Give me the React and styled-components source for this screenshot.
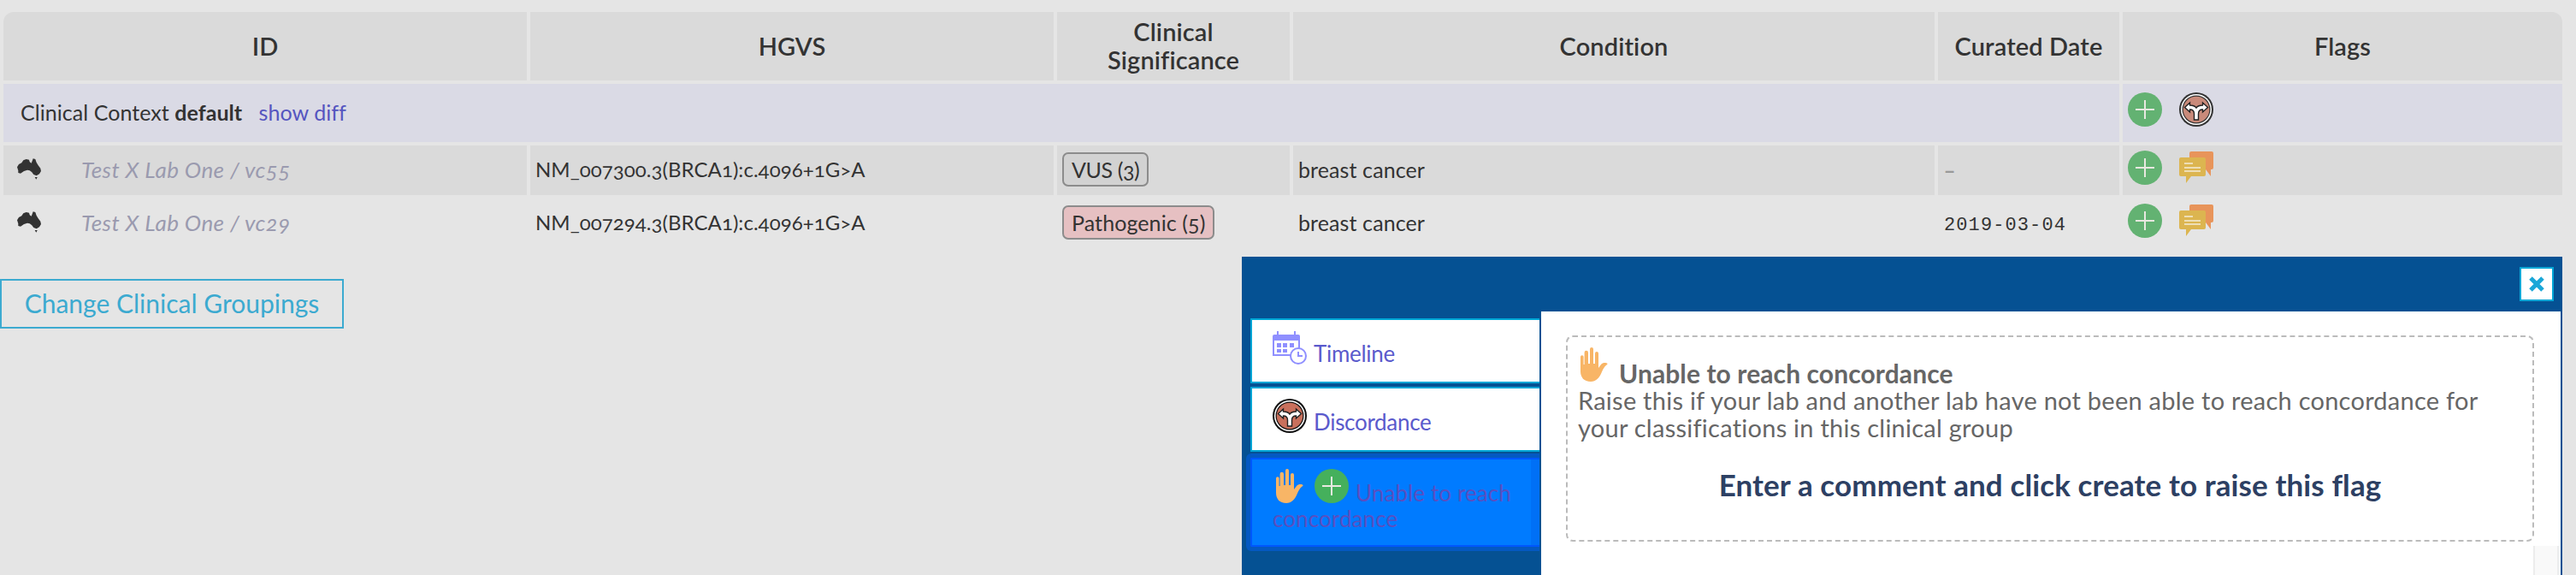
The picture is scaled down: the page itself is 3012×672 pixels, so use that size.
import React from "react";
import styled, { createGlobalStyle } from "styled-components";

const Global = createGlobalStyle`
  html, body { margin: 0; padding: 0; background: #e5e5e5; }
  body { width: 3012px; height: 672px; overflow: hidden; font-family: "Lato", "Open Sans", sans-serif; font-feature-settings: "onum" 1; color: #333; }
`;
const Page = styled.div`width: 3012px; height: 672px; position: relative; padding-top: 10px; box-sizing: border-box;`;
const Table = styled.table`
  width: 3000px; table-layout: fixed; border-collapse: separate; border-spacing: 4px; font-size: 24px;
`;
const Th = styled.th`
  height: 80px; padding: 0 8px 2px; box-sizing: border-box; background: #dadada; color: #333; font-size: 29px; font-weight: 600; letter-spacing: .1px; line-height: 33px; text-align: center;
  &:first-child { border-top-left-radius: 12px; }
  &:last-child { border-top-right-radius: 12px; }
`;
const ContextRow = styled.tr`height: 68px;`;
const ContextCell = styled.td`background: #dadae5; padding: 0 20px 3px; font-size: 25px; letter-spacing: .05px;`;
const FlagContextCell = styled.td`background: #dadae5; padding: 0 6px;`;
const Row = styled.tr`height: 58px;`;
const Td = styled.td`background: ${p => p.$shaded ? "#dadada" : "transparent"}; padding: 0 6px 3px; font-size: 25px; letter-spacing: .1px; color: #333; white-space: nowrap;`;
const HgvsCell = styled(Td)`font-size: 24px; letter-spacing: .05px;`;
const DateCell = styled(Td)`padding-left: 7px;`;
const FlagCell = styled(Td)`padding-bottom: 0;`;
const BadgeCell = styled(Td)`padding-bottom: 0;`;
const Link = styled.a`color: #5555c0; margin-left: 13px;`;
const IdWrap = styled.div`display: flex; align-items: center; gap: 47px; padding-left: 10px;`;
const LabName = styled.span`font-style: italic; font-size: 26px; letter-spacing: .4px; color: #9a9aaf;`;
const Badge = styled.span`
  display: inline-block; height: 40px; line-height: 36px; box-sizing: border-box; padding: 0 9px; border: 2px solid #8c8c8c; border-radius: 7px;
  background: ${p => p.$bg}; font-size: 25px; color: #333; letter-spacing: ${p => p.$spacing}px; vertical-align: middle; margin-top: -2px;
`;
const Mono = styled.span`font-family: "Liberation Mono", monospace; font-size: 22px; letter-spacing: 1.1px; color: #333;`;
const Dash = styled.span`color: #999; font-family: "Liberation Mono", monospace; font-size: 22px; font-weight: 700;`;
const Flags = styled.div`display: flex; align-items: flex-start; gap: 20px; height: 40px; margin-top: ${p => p.$shift}px;`;
const ChatSlot = styled.span`display: block; margin-top: 1px;`;
const ChangeButton = styled.button`
  display: block; margin: 32px 0 0 0; width: 402px; height: 58px; box-sizing: border-box; border: 2px solid #3caad0; background: transparent;
  color: #3caad0; font: 400 30px "Lato", sans-serif; padding: 0 0 2px 0;
`;
const Dialog = styled.div`
  position: absolute; left: 1452px; top: 300px; width: 1544px; height: 372px; background: #055193; box-sizing: border-box;
  display: flex; flex-direction: column;
`;
const CloseBar = styled.div`height: 64px; flex: none; display: flex; justify-content: flex-end; padding: 12px 10px 0 0; box-sizing: border-box;`;
const Close = styled.button`
  width: 40px; height: 40px; padding: 0; box-sizing: border-box; border: 2px solid #00a6d6; background: #fff; display: flex; align-items: center; justify-content: center;
`;
const Body = styled.div`flex: 1; display: flex; gap: 2px; min-height: 0; padding-right: 2px;`;
const Tabs = styled.div`width: 348px; flex: none; display: flex; flex-direction: column; gap: 4px; padding: 8px 0 0 10px; box-sizing: border-box; overflow: hidden;`;
const Tab = styled.div`
  width: 338px; height: 76px; flex: none; box-sizing: border-box; border: 2px solid #00a6d6; border-right: none; background: #fff; color: #5a5acc;
  font-size: 26px; line-height: 30px; letter-spacing: -.3px; padding: 12px 0 0 24px;
  svg { vertical-align: -3px; margin-right: 8px; }
`;
const ActiveTab = styled.div`
  width: 338px; height: 104px; flex: none; margin-top: 3px; box-sizing: border-box; background: #007bff; color: #5a4fc0; border: 2px solid #0057ff; border-right: none;
  font-size: 26px; line-height: 30px; letter-spacing: .1px; padding: 11px 0 0 24px; border-radius: 2px 0 0 2px;
  box-shadow: 0 0 0 5px #0459c2, inset -10px 0 0 #0070f6;
`;
const ActiveIcons = styled.span`
  display: inline-flex; gap: 12px; align-items: flex-end; vertical-align: -2px; margin: 0 8px 0 3px;
`;
const Content = styled.div`flex: 1; background: #fff; padding: 28px 0 0 29px; box-sizing: border-box; overflow: hidden;`;
const Dashed = styled.div`
  width: 1132px; height: 241px; box-sizing: border-box; border: 2px dashed #bbb; border-radius: 8px; padding: 12px; color: #666; font-size: 29px; line-height: 32px; letter-spacing: .25px;
`;
const Title = styled.div`
  font-weight: 700; font-size: 30px; letter-spacing: .1px;
  svg { vertical-align: 2px; margin: 0 12px 0 2px; }
`;
const Prompt = styled.div`margin-top: 30px; text-align: center; font-size: 35px; line-height: 40px; letter-spacing: .1px; font-weight: 700; color: #2d4063;`;
const Track = styled.div`margin: 5px 0 0 1131px; width: 30px; height: 40px; box-sizing: border-box; background: #f9f9f9; border-left: 2px solid #ececec; border-right: 2px solid #eee;`;

const Plus = ({ size = 40, bg = "#63b272" }) => (
  <svg width={size} height={size} viewBox="0 0 40 40"><circle cx="20" cy="20" r="20" fill={bg} /><path d="M20 9v22M9 20h22" stroke="#e8e8e0" strokeWidth="2" /></svg>
);
const Disc = ({ size = 40, fill = "#c98a7a", ring = "#333" }) => (
  <svg width={size} height={size} viewBox="0 0 40 40">
    <circle cx="20" cy="20" r="20" fill={ring} /><circle cx="20" cy="20" r="18" fill="#fff" /><circle cx="20" cy="20" r="16.500" fill={ring} /><circle cx="20" cy="20" r="15.300" fill={fill} />
    <path d="M17.500 32V25c0-3-2-5-5-5v3l-6-5.500 6-5.500v3c3 0 6 1 7.500 3 1.500-2 4.500-3 7.500-3v-3l6 5.500-6 5.500v-3c-3 0-5 2-5 5v7z" fill="#fff" stroke="#222" strokeWidth="1.400" />
  </svg>
);
const Chat = () => (
  <svg width="40" height="37" viewBox="0 0 40 37">
    <path d="M12 2a2 2 0 0 1 2-2h24a2 2 0 0 1 2 2v17a2 2 0 0 1-2 2h-1v8l-6-8H12z" fill="#e8945a" />
    <path d="M2 7h27a2 2 0 0 1 2 2v18a2 2 0 0 1-2 2H14l-6 8v-8H2a2 2 0 0 1-2-2V9a2 2 0 0 1 2-2z" fill="#dcb550" />
    <path d="M6 14h10M6 19h19M6 23h19" stroke="#f3ecd6" strokeWidth="1.600" />
  </svg>
);
const Hand = () => (
  <svg width="34" height="40" viewBox="0 0 34 40">
    <path d="M1 11a1.800 1.800 0 0 1 3.600 0v9h1V6a2.200 2.200 0 0 1 4.400 0v13h2V2a2 2 0 0 1 4 0v17h2V7a2 2 0 0 1 4 0v17l3-4c2-2 4-2.500 7-1.500 1 .5.5 1.500-.5 2-3 2-4 5-5.500 8C23 36 19 40 13 40 5 40 1 35 1 28z" fill="#f8b566" />
  </svg>
);
const Aus = () => (
  <svg width="28" height="25" viewBox="0 0 28 25" style={{ flex: "none" }}>
    <path d="M0 10.300L2 7l3.300-1.700 2-3L10.700 1 14 1.700l.7 2.600 2 1.400 2-5.400L21.300 1l1.400 4 2 3.300 2.600 3.400L28 15l-2 3.300-3.300 2L19.300 19l-2-2.700-2.600-2-2.700-.6-4 1.300-4 2.700-2.700-.7v-2.700zM20.700 22h3l-1.400 2.700z" fill="#333" />
  </svg>
);
const CalClock = () => (
  <svg width="40" height="40" viewBox="0 0 40 40" fill="none">
    <path d="M0 7a2 2 0 0 1 2-2h28a2 2 0 0 1 2 2v21a2 2 0 0 1-2 2H0z" fill="#8f8fff" />
    <path d="M2 12h28v16H2z" fill="#fff" />
    <path d="M5 15h5v5H5zM12 15h5v5h-5zM20 15h5v5h-5zM5 22h5v4H5zM12 22h5v4h-5z" fill="#8f8fff" />
    <path d="M6 1v7M26 1v7" stroke="#8f8fff" strokeWidth="2" />
    <circle cx="30" cy="30" r="9" fill="#fff" stroke="#8f8fff" strokeWidth="2" /><path d="M30 25v5h5" stroke="#8f8fff" strokeWidth="2" />
  </svg>
);

const columns = [612, 612, 272, 750, 212, 514];

export default function App() {
  return (
    <Page>
      <Global />
      <Table>
        <colgroup>{columns.map((w, i) => <col key={i} width={w} />)}</colgroup>
        <thead><tr><Th>ID</Th><Th>HGVS</Th><Th>Clinical<br/>Significance</Th><Th>Condition</Th><Th>Curated Date</Th><Th>Flags</Th></tr></thead>
        <tbody>
          <ContextRow><ContextCell colSpan={5}>Clinical Context <b>default</b> <Link>show diff</Link></ContextCell><FlagContextCell><Flags $shift={-8}><Plus /><Disc /></Flags></FlagContextCell></ContextRow>
          <Row>
            <Td $shaded><IdWrap><Aus /><LabName>Test X Lab One / vc55</LabName></IdWrap></Td>
            <HgvsCell $shaded>NM_007300.3(BRCA1):c.4096+1G&gt;A</HgvsCell>
            <BadgeCell $shaded><Badge $bg="#d2d2d2" $spacing={-0.4}>VUS (3)</Badge></BadgeCell>
            <Td $shaded>breast cancer</Td>
            <DateCell $shaded><Dash>–</Dash></DateCell>
            <FlagCell $shaded><Flags $shift={-6}><Plus /><ChatSlot><Chat /></ChatSlot></Flags></FlagCell>
          </Row>
          <Row>
            <Td><IdWrap><Aus /><LabName>Test X Lab One / vc29</LabName></IdWrap></Td>
            <HgvsCell>NM_007294.3(BRCA1):c.4096+1G&gt;A</HgvsCell>
            <BadgeCell><Badge $bg="#e6c0c2" $spacing={0.1}>Pathogenic (5)</Badge></BadgeCell>
            <Td>breast cancer</Td>
            <DateCell><Mono>2019-03-04</Mono></DateCell>
            <FlagCell><Flags $shift={-6}><Plus /><ChatSlot><Chat /></ChatSlot></Flags></FlagCell>
          </Row>
        </tbody>
      </Table>
      <ChangeButton>Change Clinical Groupings</ChangeButton>
      <Dialog>
        <CloseBar><Close><svg width="22" height="22" viewBox="0 0 22 22"><path d="M4 4l14 14M18 4L4 18" stroke="#1aa7d8" strokeWidth="5" /></svg></Close></CloseBar>
        <Body>
          <Tabs>
            <Tab><CalClock />Timeline</Tab>
            <Tab><Disc fill="#c9705c" ring="#111" />Discordance</Tab>
            <ActiveTab><ActiveIcons><Hand /><Plus bg="#45b05c" /></ActiveIcons>Unable to reach concordance</ActiveTab>
          </Tabs>
          <Content>
            <Dashed>
              <Title><Hand />Unable to reach concordance</Title>
              Raise this if your lab and another lab have not been able to reach concordance for your classifications in this clinical group
              <Prompt>Enter a comment and click create to raise this flag</Prompt>
            </Dashed>
            <Track />
          </Content>
        </Body>
      </Dialog>
    </Page>
  );
}
